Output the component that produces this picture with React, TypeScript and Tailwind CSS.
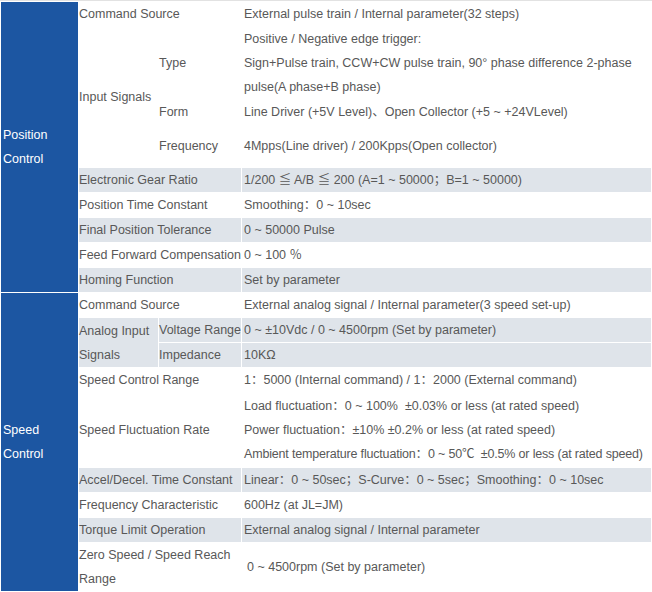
const grey = 'bg-[#dfe4ea]';

function Side({ rows, children }: { rows: number; children: React.ReactNode }) {
  return (
    <td
      rowSpan={rows}
      className="bg-[#1c56a2] text-white align-middle p-0 pl-[2px]"
    >
      {children}
    </td>
  );
}

function Cell({
  children,
  span,
  rows,
  shade,
  className = '',
}: {
  children: React.ReactNode;
  span?: number;
  rows?: number;
  shade?: boolean;
  className?: string;
}) {
  return (
    <td
      colSpan={span}
      rowSpan={rows}
      className={`p-0 align-middle whitespace-nowrap ${shade ? grey : 'bg-white'} ${className}`}
    >
      {children}
    </td>
  );
}

function Val({ children, shade, className = '' }: { children: React.ReactNode; shade?: boolean; className?: string }) {
  return (
    <Cell shade={shade} className={`pl-[2px] ${className}`}>
      {children}
    </Cell>
  );
}

export default function App() {
  return (
    <div className="w-[652px] h-[592px] bg-white overflow-hidden">
      <table className="table-fixed w-[652px] border-separate [border-spacing:1px] border-t border-[#e2e2e2] text-[12.5px] leading-6 text-[#585858] font-['Liberation_Sans','Noto_Sans_CJK_SC',sans-serif]">
        <colgroup>
          <col className="w-[77px]" />
          <col className="w-[79px]" />
          <col className="w-[82px]" />
          <col className="w-[409px]" />
        </colgroup>
        <tbody>
          <tr className="h-6">
            <Side rows={9}>
              Position
              <br />
              Control
            </Side>
            <Cell span={2}>Command Source</Cell>
            <Val>External pulse train / Internal parameter(32 steps)</Val>
          </tr>
          <tr className="h-[72px]">
            <Cell rows={3}>Input Signals</Cell>
            <Cell>Type</Cell>
            <Val>
              Positive / Negative edge trigger:
              <br />
              Sign+Pulse train, CCW+CW pulse train, 90° phase difference 2-phase
              <br />
              pulse(A phase+B phase)
            </Val>
          </tr>
          <tr className="h-6">
            <Cell>Form</Cell>
            <Val>Line Driver (+5V Level)、Open Collector (+5 ~ +24VLevel)</Val>
          </tr>
          <tr className="h-[42px]">
            <Cell>Frequency</Cell>
            <Val>4Mpps(Line driver) / 200Kpps(Open collector)</Val>
          </tr>
          <tr className="h-6">
            <Cell span={2} shade>
              Electronic Gear Ratio
            </Cell>
            <Val shade>1/200 ≦ A/B ≦ 200 (A=1 ~ 50000；B=1 ~ 50000)</Val>
          </tr>
          <tr className="h-6">
            <Cell span={2}>Position Time Constant</Cell>
            <Val>Smoothing：0 ~ 10sec</Val>
          </tr>
          <tr className="h-6">
            <Cell span={2} shade>
              Final Position Tolerance
            </Cell>
            <Val shade>0 ~ 50000 Pulse</Val>
          </tr>
          <tr className="h-6">
            <Cell span={2}>Feed Forward Compensation</Cell>
            <Val>0 ~ 100 ％</Val>
          </tr>
          <tr className="h-6">
            <Cell span={2} shade>
              Homing Function
            </Cell>
            <Val shade>Set by parameter</Val>
          </tr>

          <tr className="h-6">
            <Side rows={9}>
              Speed
              <br />
              Control
            </Side>
            <Cell span={2}>Command Source</Cell>
            <Val>External analog signal / Internal parameter(3 speed set-up)</Val>
          </tr>
          <tr className="h-6">
            <Cell rows={2} shade>
              Analog Input
              <br />
              Signals
            </Cell>
            <Cell shade>Voltage Range</Cell>
            <Val shade>0 ~ ±10Vdc / 0 ~ 4500rpm (Set by parameter)</Val>
          </tr>
          <tr className="h-6">
            <Cell shade>Impedance</Cell>
            <Val shade>10KΩ</Val>
          </tr>
          <tr className="h-6">
            <Cell span={2}>Speed Control Range</Cell>
            <Val>1：5000 (Internal command) / 1：2000 (External command)</Val>
          </tr>
          <tr className="h-[74px]">
            <Cell span={2}>Speed Fluctuation Rate</Cell>
            <Val>
              Load fluctuation：0 ~ 100%&nbsp; ±0.03% or less (at rated speed)
              <br />
              Power fluctuation：±10% ±0.2% or less (at rated speed)
              <br />
              <span className="tracking-[-0.18px]">
                Ambient temperature fluctuation：0 ~ 50℃&nbsp; ±0.5% or less (at rated speed)
              </span>
            </Val>
          </tr>
          <tr className="h-6">
            <Cell span={2} shade>
              Accel/Decel. Time Constant
            </Cell>
            <Val shade>Linear：0 ~ 50sec；S-Curve：0 ~ 5sec；Smoothing：0 ~ 10sec</Val>
          </tr>
          <tr className="h-6">
            <Cell span={2}>Frequency Characteristic</Cell>
            <Val>600Hz (at JL=JM)</Val>
          </tr>
          <tr className="h-6">
            <Cell span={2} shade>
              Torque Limit Operation
            </Cell>
            <Val shade>External analog signal / Internal parameter</Val>
          </tr>
          <tr className="h-[48px]">
            <Cell span={2}>
              Zero Speed / Speed Reach
              <br />
              Range
            </Cell>
            <Val className="pl-[5px]">0 ~ 4500rpm (Set by parameter)</Val>
          </tr>
        </tbody>
      </table>
    </div>
  );
}
